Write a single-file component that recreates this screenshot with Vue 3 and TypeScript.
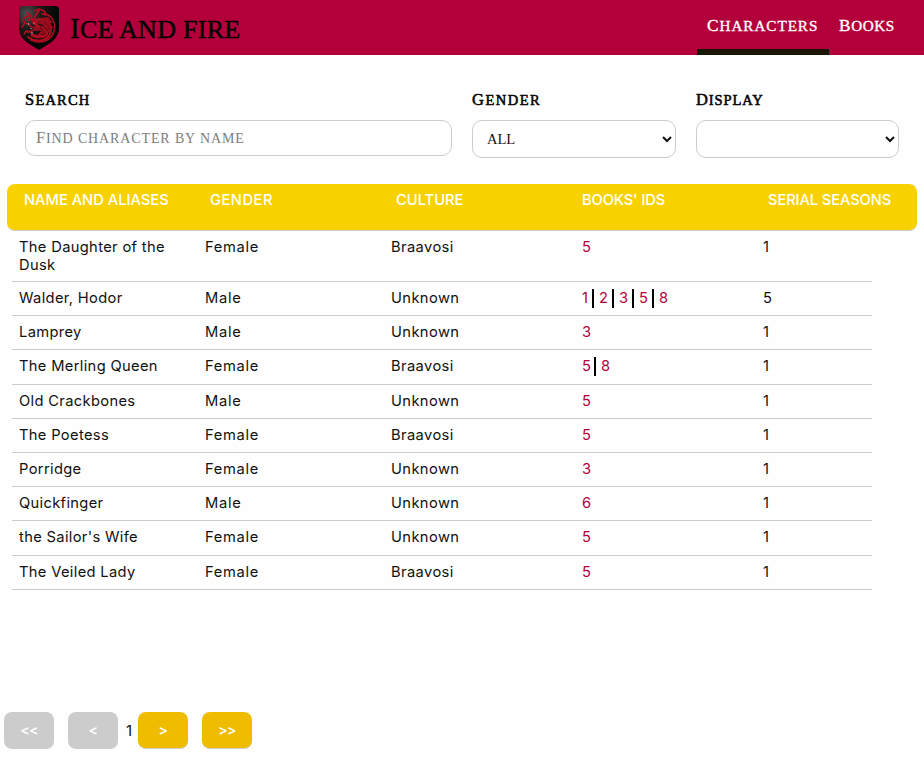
<script setup lang="ts">
import { ref } from 'vue'

interface Character {
  name: string
  gender: string
  culture: string
  books: number[]
  seasons: number
}

const columns: { key: string; label: string }[] = [
  { key: 'name', label: 'NAME AND ALIASES' },
  { key: 'gender', label: 'GENDER' },
  { key: 'culture', label: 'CULTURE' },
  { key: 'books', label: "BOOKS' IDS" },
  { key: 'seasons', label: 'SERIAL SEASONS' },
]

const characters: Character[] = [
  { name: 'The Daughter of the Dusk', gender: 'Female', culture: 'Braavosi', books: [5], seasons: 1 },
  { name: 'Walder, Hodor', gender: 'Male', culture: 'Unknown', books: [1, 2, 3, 5, 8], seasons: 5 },
  { name: 'Lamprey', gender: 'Male', culture: 'Unknown', books: [3], seasons: 1 },
  { name: 'The Merling Queen', gender: 'Female', culture: 'Braavosi', books: [5, 8], seasons: 1 },
  { name: 'Old Crackbones', gender: 'Male', culture: 'Unknown', books: [5], seasons: 1 },
  { name: 'The Poetess', gender: 'Female', culture: 'Braavosi', books: [5], seasons: 1 },
  { name: 'Porridge', gender: 'Female', culture: 'Unknown', books: [3], seasons: 1 },
  { name: 'Quickfinger', gender: 'Male', culture: 'Unknown', books: [6], seasons: 1 },
  { name: "the Sailor's Wife", gender: 'Female', culture: 'Unknown', books: [5], seasons: 1 },
  { name: 'The Veiled Lady', gender: 'Female', culture: 'Braavosi', books: [5], seasons: 1 },
]

const search = ref('')
const gender = ref('All')
const display = ref('')
const page = ref(1)
</script>

<template>
  <div class="page">
    <header class="topbar">
      <svg class="crest" viewBox="0 0 40 44">
        <defs>
          <radialGradient id="shade" cx="20%" cy="18%" r="75%">
            <stop offset="0" stop-color="#505050" />
            <stop offset="0.45" stop-color="#1a1a1a" />
            <stop offset="1" stop-color="#050505" />
          </radialGradient>
        </defs>
        <path d="M4 0H36Q40 0 40 4V22C40 33 30 38 20 44C10 38 0 33 0 22V4Q0 0 4 0Z" fill="url(#shade)" />
        <g fill="none" stroke="#ae0e20" stroke-linecap="round" stroke-linejoin="round">
          <path d="M27 8C34 11 37 18 35 25C33 34 22 39 12 34" stroke-width="1.5" />
          <path d="M9 31C17 37 28 35 31 28C34 21 30 15 25 14" stroke-width="2" />
          <path d="M25 14C18 12 14 16 18 20C22 23 27 22 28 26C28 31 20 32 13 29" stroke-width="3.2" />
          <path d="M20 17C13 15 16 9 20 5M16 5L20 3L25 5L27 9L23 8" stroke-width="1.8" />
          <path d="M18 19C11 18 15 12 11 9L5 12M11 9L8 7M9 14L13 13" stroke-width="1.8" />
          <path d="M18 22C10 23 12 17 6 17L3 21M6 17L4 14" stroke-width="1.7" />
          <path d="M20 24C12 23 12 27 7 25L5 28M8 26L13 26" stroke-width="1.5" />
        </g>
        <path
          d="M22 12L29 11L34 17L30 17L35 22L30 22L33 27L28 26L29 31L24 28L18 30L22 25L19 23L24 20L20 17Z"
          fill="#9c0c1c"
        />
        <path d="M25 15L30 21M23 18L29 25M21 21L26 28" fill="none" stroke="#3c070c" stroke-width="0.7" />
        <g fill="#e5c9cb">
          <circle cx="9.5" cy="18" r="0.7" />
          <circle cx="15" cy="17" r="0.6" />
          <circle cx="13" cy="27" r="0.7" />
          <circle cx="12" cy="22.500" r="0.6" />
        </g>
      </svg>
      <h1 class="caps title">Ice and fire</h1>
      <nav class="nav">
        <a class="caps tab tab-characters active">Characters</a>
        <a class="caps tab tab-books">Books</a>
      </nav>
    </header>

    <section class="filters">
      <div class="field">
        <label class="caps label label-search">Search</label>
        <div class="search-box">
          <input v-model="search" class="control input" type="text" aria-label="Search" />
          <span v-if="!search" class="caps hint">Find character by name</span>
        </div>
      </div>
      <div class="field">
        <label class="caps label label-gender">Gender</label>
        <select v-model="gender" class="control select">
          <option>All</option>
        </select>
      </div>
      <div class="field">
        <label class="caps label label-display">Display</label>
        <select v-model="display" class="control select">
          <option value=""></option>
        </select>
      </div>
    </section>

    <section class="table">
      <div class="thead">
        <div v-for="c in columns" :key="c.key"><span :class="['h-' + c.key]">{{ c.label }}</span></div>
      </div>
      <div class="tbody">
        <div v-for="ch in characters" :key="ch.name" class="row">
          <div class="name">{{ ch.name }}</div>
          <div class="gender">{{ ch.gender }}</div>
          <div>{{ ch.culture }}</div>
          <div class="books">
            <a v-for="b in ch.books" :key="b" class="book">{{ b }}</a>
          </div>
          <div>{{ ch.seasons }}</div>
        </div>
      </div>
    </section>

    <footer class="pager">
      <button class="btn" disabled>&lt;&lt;</button>
      <button class="btn" disabled>&lt;</button>
      <span class="current">{{ page }}</span>
      <button class="btn">&gt;</button>
      <button class="btn">&gt;&gt;</button>
    </footer>
  </div>
</template>

<style>
body {
  background: #fefefe;
}
</style>

<style scoped>
.page {
  height: 769px;
  box-sizing: border-box;
  display: flex;
  flex-direction: column;
  overflow: hidden;
  color: #111;
  font-family: Inter, 'Noto Sans', sans-serif;
}
.caps {
  display: block;
  font-family: 'Liberation Serif', serif;
  text-transform: uppercase;
  white-space: nowrap;
}
.topbar {
  flex: none;
  height: 55px;
  display: flex;
  padding: 0 19px;
  background: #b3003b;
}
.crest {
  width: 40px;
  height: 44px;
  margin-top: 6px;
}
.title {
  margin: 0 auto 0 11px;
  font-size: 26px;
  line-height: 56px;
  font-weight: 400;
  letter-spacing: 0.28px;
  color: #050505;
  -webkit-text-stroke: 0.5px #050505;
}
.title::first-letter {
  font-size: 29px;
}
.nav {
  display: flex;
}
.tab {
  box-sizing: border-box;
  height: 55px;
  padding: 0 10px;
  line-height: 52px;
  font-size: 15.2px;
  color: #fff;
  -webkit-text-stroke: 0.35px #fff;
  letter-spacing: 0.95px;
}
.tab::first-letter {
  font-size: 17.3px;
}
.tab-characters {
  width: 132px;
}
.tab-books {
  width: 76px;
  letter-spacing: 0.6px;
}
.active {
  border-bottom: 6px solid #1a1505;
}
.filters {
  flex: none;
  display: grid;
  grid-template-columns: 427px 204px 203px;
  column-gap: 20px;
  padding: 36px 25px 0;
  height: 129px;
  box-sizing: border-box;
}
.label {
  height: 29px;
  line-height: 18px;
  font-size: 14.5px;
  color: #050505;
  letter-spacing: 1.2px;
  -webkit-text-stroke: 0.55px #050505;
}
.label::first-letter {
  font-size: 16.5px;
}
.label-gender {
  letter-spacing: 1.5px;
}
.label-display {
  letter-spacing: 0.9px;
}
.search-box {
  display: grid;
}
.search-box > * {
  grid-area: 1 / 1;
}
.control {
  box-sizing: border-box;
  width: 100%;
  border: 1px solid #ccc;
  border-radius: 10px;
  background: #fff;
  color: #111;
  font: 16px 'Liberation Serif', serif;
}
.input {
  height: 36px;
  padding: 0 10px;
}
.hint {
  padding-left: 11px;
  line-height: 36px;
  font-size: 14px;
  color: #7d7d7d;
  letter-spacing: 0.87px;
  pointer-events: none;
}
.hint::first-letter {
  font-size: 16.5px;
}
.select {
  height: 38px;
  padding: 0 0 0 10px;
  font-size: 14.5px;
  text-transform: uppercase;
}
.table {
  flex: none;
}
.thead {
  box-sizing: border-box;
  height: 47px;
  margin: 0 7px;
  padding: 6px 0 0 17px;
  display: grid;
  grid-template-columns: repeat(4, 186px) 1fr;
  border-radius: 8px;
  border-bottom: 1px solid #ccc;
  background: #f8d200;
  color: #fff;
  font-size: 14.7px;
  line-height: 20px;
  font-weight: 500;
  white-space: nowrap;
}
.h-gender {
  letter-spacing: 0.5px;
}
.h-books,
.h-seasons {
  letter-spacing: -0.1px;
}
.tbody {
  width: 860px;
  margin-left: 12px;
}
.row {
  box-sizing: border-box;
  min-height: 34.2px;
  padding: 7px 0 7px 7px;
  display: grid;
  grid-template-columns: 186px 186px 191px 181px 1fr;
  border-bottom: 1px solid #ccc;
  font-size: 14.7px;
  line-height: 18px;
  letter-spacing: 0.4px;
}
.name {
  padding-right: 30px;
  letter-spacing: 0.34px;
}
.gender {
  letter-spacing: 0.7px;
}
.books {
  display: flex;
  letter-spacing: 0;
}
.book {
  color: #b3003b;
  line-height: 19px;
  height: 19px;
}
.book + .book {
  margin-left: 3px;
  padding-left: 5px;
  border-left: 2px solid #000;
}
.book:nth-child(n + 2) {
  min-width: 10px;
}
.book:first-child {
  min-width: 7px;
}
.pager {
  display: flex;
  margin-top: 122px;
  padding-left: 4px;
}
.btn {
  box-sizing: border-box;
  width: 50px;
  height: 37px;
  margin-right: 14px;
  padding: 0;
  border: 0;
  border-bottom: 1px solid #ccc;
  border-radius: 8px;
  background: #f0bc00;
  color: #fff;
  font: 600 14px Inter, sans-serif;
  letter-spacing: -0.6px;
}
.btn:disabled {
  background: #ccc;
}
.current {
  width: 10px;
  margin-left: -8px;
  margin-right: 4px;
  text-align: center;
  font: 15px/37px Inter, sans-serif;
}
</style>
